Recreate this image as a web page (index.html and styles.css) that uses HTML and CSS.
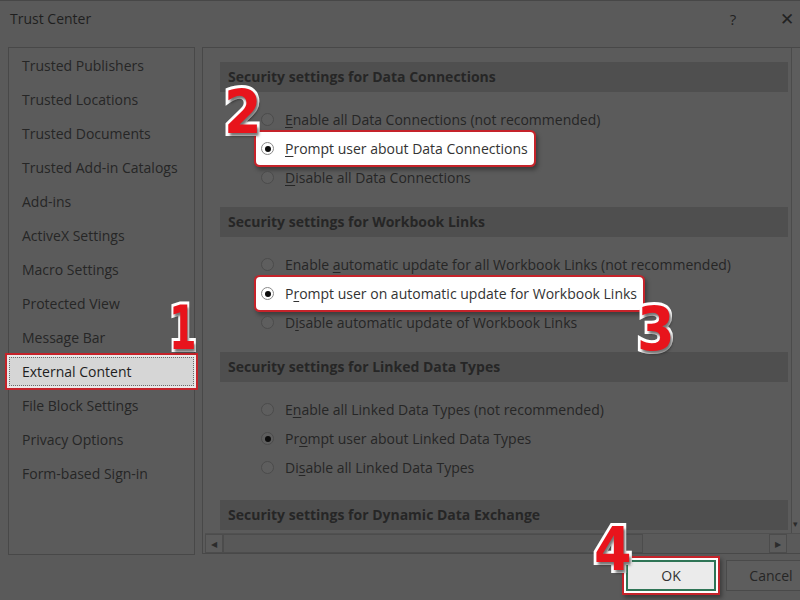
FILE: index.html
```html
<!DOCTYPE html>
<html>
<head>
<meta charset="utf-8">
<title>Trust Center</title>
<link rel="stylesheet" href="styles.css">
</head>
<body>
<div class="dialog">
  <div class="titlebar">
    <span class="title">Trust Center</span>
    <span class="help">?</span>
    <span class="close">&#x2715;</span>
  </div>
  <div class="main">
    <nav class="nav">
      <div class="nav-item">Trusted Publishers</div>
      <div class="nav-item">Trusted Locations</div>
      <div class="nav-item">Trusted Documents</div>
      <div class="nav-item">Trusted Add-in Catalogs</div>
      <div class="nav-item">Add-ins</div>
      <div class="nav-item">ActiveX Settings</div>
      <div class="nav-item">Macro Settings</div>
      <div class="nav-item">Protected View</div>
      <div class="nav-item">Message Bar</div>
      <div class="nav-item active"><span class="focus">External Content</span></div>
      <div class="nav-item">File Block Settings</div>
      <div class="nav-item">Privacy Options</div>
      <div class="nav-item">Form-based Sign-in</div>
    </nav>
    <div class="pane">
      <div class="pane-body">
        <div class="content">
          <section class="group">
            <div class="band">Security settings for Data Connections</div>
            <div class="options">
              <div class="opt"><span class="radio"></span><span><u>E</u>nable all Data Connections (not recommended)</span></div>
              <div class="opt hl"><span class="radio on"></span><span><u>P</u>rompt user about Data Connections</span></div>
              <div class="opt"><span class="radio"></span><span><u>D</u>isable all Data Connections</span></div>
            </div>
          </section>
          <section class="group">
            <div class="band">Security settings for Workbook Links</div>
            <div class="options">
              <div class="opt"><span class="radio"></span><span>Enable <u>a</u>utomatic update for all Workbook Links (not recommended)</span></div>
              <div class="opt hl"><span class="radio on"></span><span>P<u>r</u>ompt user on automatic update for Workbook Links</span></div>
              <div class="opt"><span class="radio"></span><span>D<u>i</u>sable automatic update of Workbook Links</span></div>
            </div>
          </section>
          <section class="group">
            <div class="band">Security settings for Linked Data Types</div>
            <div class="options last">
              <div class="opt"><span class="radio"></span><span>E<u>n</u>able all Linked Data Types (not recommended)</span></div>
              <div class="opt"><span class="radio on"></span><span>Pr<u>o</u>mpt user about Linked Data Types</span></div>
              <div class="opt"><span class="radio"></span><span>Di<u>s</u>able all Linked Data Types</span></div>
            </div>
          </section>
          <section class="group">
            <div class="band">Security settings for Dynamic Data Exchange</div>
          </section>
        </div>
        <div class="vscroll"><span class="vdown">&#9662;</span></div>
      </div>
      <div class="hscroll">
        <span class="harrow">&#9664;</span>
        <div class="htrack"><div class="hthumb"></div></div>
        <span class="harrow">&#9654;</span>
        <span class="corner"></span>
      </div>
    </div>
  </div>
  <div class="footer">
    <button class="btn ok">OK</button>
    <button class="btn">Cancel</button>
  </div>
  <span class="num n1">1</span>
  <span class="num n2">2</span>
  <span class="num n3">3</span>
  <span class="num n4">4</span>
</div>
</body>
</html>
```
FILE: styles.css
```css
html, body {
  margin: 0;
  padding: 0;
  width: 800px;
  height: 600px;
  overflow: hidden;
  background: #5a5a5a;
}
.dialog {
  position: relative;
  width: 800px;
  height: 600px;
  box-sizing: border-box;
  border-top: 1px solid #474747;
  background: #5a5a5a;
  font-family: "Open Sans", "Noto Sans", sans-serif;
  font-size: 14px;
  color: #242424;
  display: flex;
  flex-direction: column;
}
.titlebar {
  height: 46px;
  display: flex;
  align-items: flex-start;
  padding-top: 8px;
  box-sizing: border-box;
}
.title {
  margin-left: 10px;
  font-size: 14px;
  line-height: 20px;
  color: #1f1f1f;
}
.help {
  margin-left: auto;
  width: 16px;
  text-align: center;
  font-size: 15px;
  line-height: 20px;
  color: #222;
}
.close {
  margin-left: 36px;
  margin-right: 3px;
  width: 20px;
  text-align: center;
  font-size: 17px;
  line-height: 20px;
  font-weight: 300;
  color: #222;
}
.main {
  display: flex;
  padding-left: 8px;
  gap: 7px;
  height: 508px;
}
.nav {
  width: 189px;
  box-sizing: border-box;
  border: 1px solid #484848;
  background: #5b5b5b;
  padding-top: 1px;
}
.nav-item {
  height: 34px;
  line-height: 34px;
  padding-left: 13px;
  white-space: nowrap;
  color: #262626;
}
.nav-item.active {
  padding: 2px 0 3px 0;
  box-sizing: border-box;
}
.focus {
  display: block;
  height: 29px;
  line-height: 27px;
  box-sizing: border-box;
  border: 1px dotted #6d6d6d;
  background: #d6d6d6;
  padding-left: 12px;
  color: #1e1e1e;
  box-shadow: 0 0 0 2px #e9e9e9, 0 0 0 4px #c5232a;
}
.pane {
  flex: 1;
  box-sizing: border-box;
  border: 1px solid #484848;
  border-right: 0;
  background: #5b5b5b;
  display: flex;
  flex-direction: column;
  height: 507px;
}
.pane-body {
  display: flex;
  height: 486px;
  overflow: hidden;
}
.content {
  width: 568px;
  margin-left: 17px;
  padding-top: 14px;
}
.band {
  height: 30px;
  line-height: 30px;
  background: #4f4f4f;
  padding-left: 8px;
  font-weight: 700;
  font-size: 14px;
  color: #262626;
  white-space: nowrap;
}
.options {
  padding: 13px 0 15px 38px;
}
.options.last {
  padding-bottom: 18px;
}
.opt {
  display: flex;
  align-items: center;
  width: max-content;
  height: 29px;
  padding: 0 4px 0 3px;
  white-space: nowrap;
  color: #262626;
}
.opt u {
  text-decoration-thickness: 1px;
  text-underline-offset: 2px;
}
.opt.hl {
  background: #ffffff;
  color: #333333;
  border-radius: 2px;
  box-shadow: 0 0 0 2px #ffffff, 0 0 0 4px #c5232a, 2px 3px 4px 4px rgba(0,0,0,0.35);
}
.radio {
  width: 13px;
  height: 13px;
  box-sizing: border-box;
  border-radius: 50%;
  border: 1px solid #4b4b4b;
  background: #5e5e5e;
  margin-right: 11px;
  display: flex;
  align-items: center;
  justify-content: center;
  flex: none;
}
.radio.on::after {
  content: "";
  width: 6px;
  height: 6px;
  border-radius: 50%;
  background: #0c0c0c;
}
.hl .radio {
  background: #ffffff;
  border-color: #8a8a8a;
}
.vscroll {
  margin-left: 3px;
  width: 8px;
  border-left: 1px solid #4b4b4b;
  background: #5d5d5d;
  display: flex;
  flex-direction: column;
  justify-content: flex-end;
}
.vdown {
  font-size: 9px;
  line-height: 18px;
  color: #2a2a2a;
  padding-left: 1px;
}
.hscroll {
  height: 19px;
  display: flex;
  align-items: stretch;
  margin-left: 2px;
  border-top: 1px solid #505050;
}
.harrow {
  width: 18px;
  box-sizing: border-box;
  border: 1px solid #4c4c4c;
  background: #5c5c5c;
  font-size: 8px;
  line-height: 17px;
  text-align: center;
  color: #2c2c2c;
}
.htrack {
  flex: none;
  width: 546px;
  background: #5a5a5a;
}
.hthumb {
  width: 420px;
  height: 100%;
  box-sizing: border-box;
  border: 1px solid #4c4c4c;
  background: #585858;
}
.corner {
  flex: 1;
  background: #5a5a5a;
}
.footer {
  display: flex;
  gap: 10px;
  padding: 5px 0 0 626px;
}
.btn {
  flex: none;
  width: 90px;
  height: 31px;
  box-sizing: border-box;
  border: 1px solid #4a4a4a;
  background: #5d5d5d;
  font-family: "Open Sans", "Noto Sans", sans-serif;
  font-size: 14px;
  color: #262626;
  padding: 0;
}
.btn.ok {
  border: 2px solid #2f7556;
  background: #ebebeb;
  color: #333333;
  box-shadow: 0 0 0 2px #ffffff, 0 0 0 4px #c5232a, 2px 3px 4px 4px rgba(0,0,0,0.35);
}
.num {
  position: absolute;
  font-family: "DejaVu Sans", sans-serif;
  font-weight: 700;
  font-size: 60px;
  line-height: 1;
  color: #e8141c;
  -webkit-text-stroke: 6px #ffffff;
  paint-order: stroke fill;
  text-shadow: 2px 3px 3px rgba(0,0,0,0.55);
}
.n1 { left: 169px; top: 297px; transform: scaleX(0.66); transform-origin: left top; }
.n2 { left: 224px; top: 81px; transform: scaleX(0.9); transform-origin: left top; }
.n3 { left: 637px; top: 298px; transform: scaleX(0.9); transform-origin: left top; }
.n4 { left: 594px; top: 518px; transform: scaleX(0.9); transform-origin: left top; }
```
